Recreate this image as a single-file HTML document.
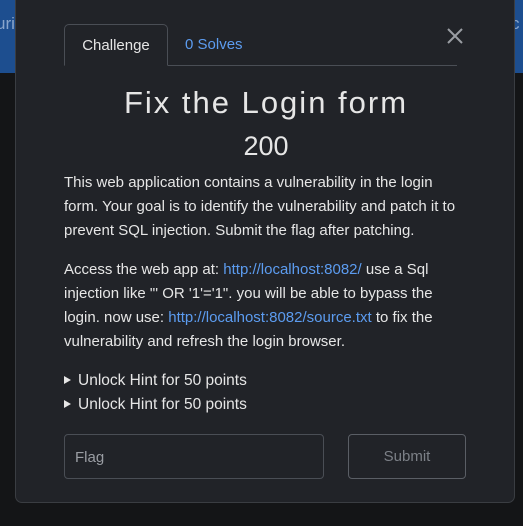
<!DOCTYPE html>
<html><head><meta charset="utf-8"><style>
*{margin:0;padding:0;box-sizing:border-box}
body{width:523px;height:526px;overflow:hidden;background:#141517;font-family:"Liberation Sans",sans-serif;position:relative}
.band{position:absolute;left:0;top:0;width:523px;height:73px;background:#1d4e8f}
.band span{position:absolute;top:14px;color:#8aa6cc;font-size:17px}
.modal{position:absolute;left:15px;top:-10px;width:500px;height:513px;background:#212328;border:1px solid #3a3d42;border-radius:7px}
.tabs{position:absolute;left:48px;top:33px;width:393px;height:42px;border-bottom:1px solid #4a4e55}
.tab1{position:absolute;left:0;top:0;width:104px;height:42px;border:1px solid #4a4e55;border-bottom:1px solid #212328;border-radius:5px 5px 0 0;color:#e6e6e6;font-size:15px;text-align:center;line-height:42px;background:#212328}
.tab2{position:absolute;left:121px;top:0;line-height:42px;color:#5c9cf0;font-size:15px}
.x{position:absolute;left:428px;top:34px;width:22px;height:22px}
h1{position:absolute;left:0;width:500px;top:94px;text-align:center;font-weight:normal;font-size:31px;letter-spacing:2px;color:#e6e6e6}
.pts{position:absolute;left:0;width:500px;top:140px;text-align:center;font-size:27px;color:#e6e6e6}
.txt{position:absolute;left:48px;top:180px;width:396px;color:#e6e6e6;font-size:15px;line-height:24px}
.txt p{margin-bottom:15px}
a{color:#5c9cf0;text-decoration:none}
.hint{font-size:15.5px;line-height:24px}
.hint:before{content:"";display:inline-block;border-left:7px solid #e6e6e6;border-top:4px solid transparent;border-bottom:4px solid transparent;margin-right:7px;vertical-align:1px}
.inp{position:absolute;left:48px;top:443px;width:260px;height:45px;border:1px solid #4a4e55;border-radius:4px;color:#9a9da3;font-size:15px;padding:14px 10px}
.btn{position:absolute;left:332px;top:443px;width:118px;height:45px;border:1px solid #5a5e65;border-radius:4px;color:#7c8087;font-size:15px;text-align:center;line-height:43px}
</style></head><body>
<div class="band"><span style="left:-4px">uri</span><span style="left:511px">c</span></div>
<div class="modal">
<div class="tabs"><div class="tab1">Challenge</div><div class="tab2">0 Solves</div></div>
<svg class="x" viewBox="0 0 22 22"><path d="M4 4L18 18M18 4L4 18" stroke="#9a9da3" stroke-width="2"/></svg>
<h1>Fix the Login form</h1>
<div class="pts">200</div>
<div class="txt">
<p>This web application contains a vulnerability in the login form. Your goal is to identify the vulnerability and patch it to prevent SQL injection. Submit the flag after patching.</p>
<p>Access the web app at: <a>http://localhost:8082/</a> use a Sql injection like "' OR '1'='1". you will be able to bypass the login. now use: <a>http://localhost:8082/source.txt</a> to fix the vulnerability and refresh the login browser.</p>
<div class="hint">Unlock Hint for 50 points</div>
<div class="hint">Unlock Hint for 50 points</div>
</div>
<div class="inp">Flag</div>
<div class="btn">Submit</div>
</div>
</body></html>
